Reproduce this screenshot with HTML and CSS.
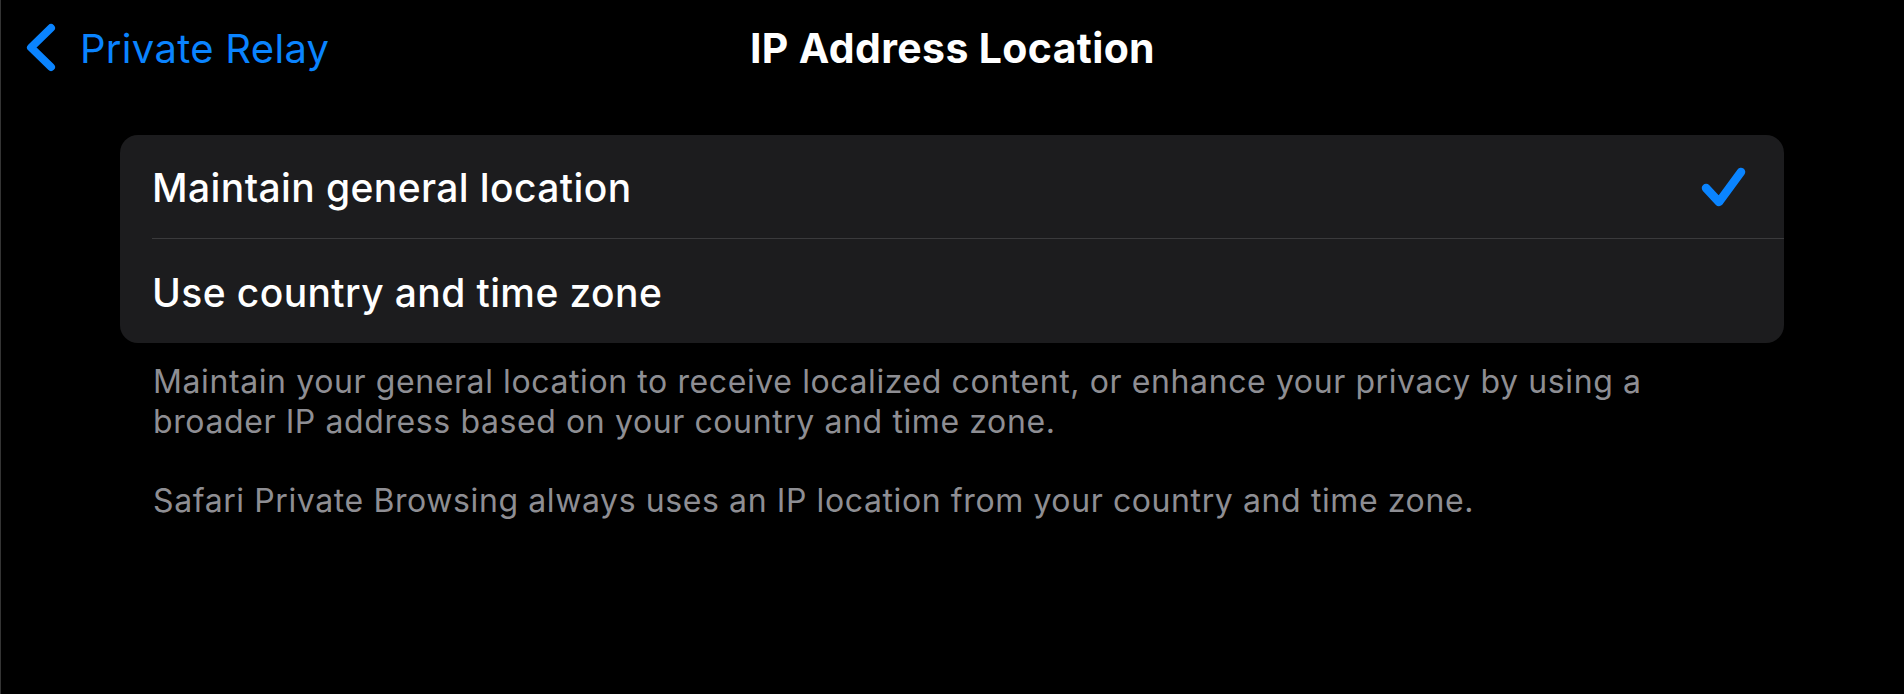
FILE: index.html
```html
<!DOCTYPE html>
<html lang="en">
<head>
<meta charset="utf-8">
<title>IP Address Location</title>
<link rel="stylesheet" href="styles.css">
</head>
<body>
<div class="screen">
  <header class="nav">
    <a class="back" href="#">
      <svg class="chevron" width="38" height="54" viewBox="0 0 38 54" aria-hidden="true">
        <path d="M29 7 L9 26.5 L29 46" fill="none" stroke="#0a84ff" stroke-width="8" stroke-linecap="round" stroke-linejoin="round"/>
      </svg>
      <span>Private Relay</span>
    </a>
    <h1 class="title">IP Address Location</h1>
    <div class="nav-spacer"></div>
  </header>
  <main class="content">
    <div class="group">
      <div class="row">
        <div class="row-body row-body--divided">
          <span class="row-label">Maintain general location</span>
          <svg class="check" width="46" height="44" viewBox="0 0 46 44" aria-hidden="true">
            <path d="M5 23 L18 37 L40 7" fill="none" stroke="#0a84ff" stroke-width="8.5" stroke-linecap="round" stroke-linejoin="round"/>
          </svg>
        </div>
      </div>
      <div class="row">
        <div class="row-body">
          <span class="row-label">Use country and time zone</span>
        </div>
      </div>
    </div>
    <div class="footer">
      <p>Maintain your general location to receive localized content, or enhance your privacy by using a broader IP address based on your country and time zone.</p>
      <p>Safari Private Browsing always uses an IP location from your country and time zone.</p>
    </div>
  </main>
</div>
</body>
</html>
```

FILE: styles.css
```css
* { box-sizing: border-box; }
html, body { margin: 0; padding: 0; }
body {
  background: #000;
  color: #fff;
  font-family: Inter, "Noto Sans", "Liberation Sans", sans-serif;
  border-left: 1px solid #343434;
  min-height: 694px;
}
.screen { width: 100%; }
.nav {
  display: grid;
  grid-template-columns: 1fr auto 1fr;
  align-items: center;
  height: 92px;
  padding: 21px 21px 23px;
}
.back {
  display: flex;
  align-items: center;
  gap: 20px;
  color: #0a84ff;
  text-decoration: none;
  font-size: 40px;
  line-height: 48px;
  letter-spacing: 0.3px;
  justify-self: start;
  margin-top: 2px;
}
.chevron { display: block; margin-top: -2px; }
.title {
  margin: 0;
  font-size: 41px;
  line-height: 48px;
  font-weight: 700;
  letter-spacing: 0.35px;
  text-align: center;
}
.content {
  padding: 43px 120px 0 119px;
}
.group {
  background: #1c1c1e;
  border-radius: 18px;
  overflow: hidden;
}
.row {
  padding-left: 32px;
}
.row-body {
  display: flex;
  align-items: center;
  justify-content: space-between;
  height: 104px;
  padding-right: 37px;
  padding-top: 3px;
}
.row-body--divided {
  border-bottom: 1px solid #3a3a3c;
  height: 104px;
}
.row-label {
  font-size: 39px;
  line-height: 48px;
  font-weight: 500;
  letter-spacing: 0.4px;
}
.check { display: block; margin-top: -3px; }
.footer {
  padding: 19px 80px 0 33px;
  color: #8e8e93;
  font-size: 32px;
  line-height: 39.5px;
  letter-spacing: 0.6px;
}
.footer p { margin: 0 0 39.5px; }
```
